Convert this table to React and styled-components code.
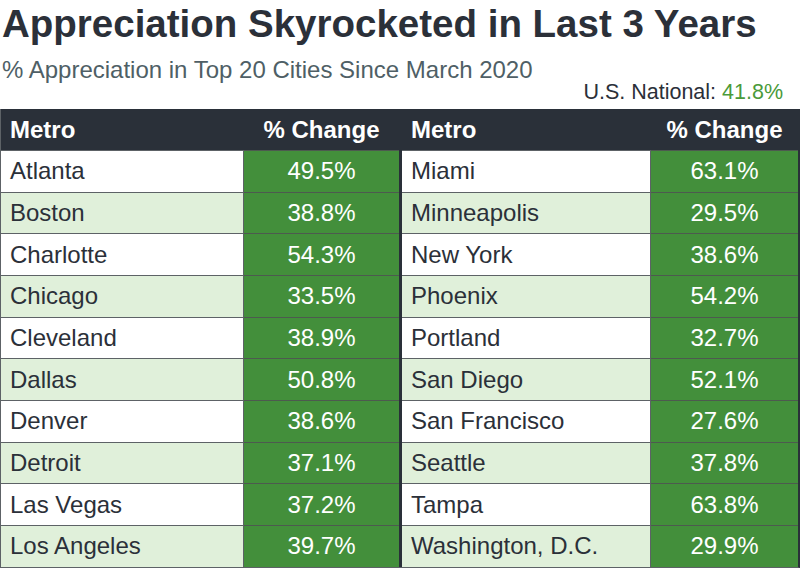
import styled, { createGlobalStyle } from 'styled-components'

const GlobalStyle = createGlobalStyle`
  body {
    margin: 0;
    background: #ffffff;
    font-family: "Liberation Sans", Arial, sans-serif;
  }
`

const left = [
  ['Atlanta', '49.5%'],
  ['Boston', '38.8%'],
  ['Charlotte', '54.3%'],
  ['Chicago', '33.5%'],
  ['Cleveland', '38.9%'],
  ['Dallas', '50.8%'],
  ['Denver', '38.6%'],
  ['Detroit', '37.1%'],
  ['Las Vegas', '37.2%'],
  ['Los Angeles', '39.7%'],
]

const right = [
  ['Miami', '63.1%'],
  ['Minneapolis', '29.5%'],
  ['New York', '38.6%'],
  ['Phoenix', '54.2%'],
  ['Portland', '32.7%'],
  ['San Diego', '52.1%'],
  ['San Francisco', '27.6%'],
  ['Seattle', '37.8%'],
  ['Tampa', '63.8%'],
  ['Washington, D.C.', '29.9%'],
]

const Page = styled.div`
  width: 802px;
  height: 570px;
  overflow: hidden;
  color: #2b3039;
`

const Title = styled.h1`
  margin: 0;
  padding: 2px 0 0 2px;
  font-size: 38.5px;
  line-height: 44px;
  font-weight: 700;
  color: #2b3039;
`

const Subtitle = styled.div`
  margin-top: 10px;
  padding-left: 2px;
  font-size: 24px;
  line-height: 28px;
  color: #4f5f66;
`

const National = styled.div`
  margin-top: -3px;
  text-align: right;
  padding-right: 19px;
  font-size: 21.5px;
  line-height: 22px;
  color: #2b3039;

  span { color: #4a9a3a; }
`

const Tables = styled.div`
  display: flex;
  width: 800px;
  margin-top: 6px;
  background: #2a3039;
  border-right: 2px solid #2a3039;
  border-bottom: 1px solid #5d6266;
  box-sizing: border-box;
`

const Table = styled.div`
  display: grid;
  grid-template-columns: ${p => p.$cols};
  grid-template-rows: 41px repeat(10, 41.67px);
  border-left: ${p => (p.$gap ? 'none' : '1px solid #5d6266')};
  margin-left: ${p => (p.$gap ? '3px' : '0')};
`

const Head = styled.div`
  display: flex;
  align-items: center;
  justify-content: ${p => (p.$center ? 'center' : 'flex-start')};
  padding-left: ${p => (p.$center ? '0' : '9px')};
  background: #2a3039;
  color: #ffffff;
  font-size: 24px;
  font-weight: 700;
`

const Cell = styled.div`
  display: flex;
  align-items: center;
  padding-left: 9px;
  font-size: 24px;
  background: ${p => (p.$alt ? '#e0f0da' : '#ffffff')};
  color: #2b3039;
  border-top: 1px solid #5d6266;
  border-right: 1px solid #5d6266;
`

const Value = styled.div`
  display: flex;
  align-items: center;
  justify-content: center;
  font-size: 24px;
  background: #438f3b;
  color: #ffffff;
  border-top: 1px solid #4d5a4f;
`

function MetroTable({ rows, cols, gap }) {
  return (
    <Table $cols={cols} $gap={gap}>
      <Head>Metro</Head>
      <Head $center>% Change</Head>
      {rows.map(([city, pct], i) => [
        <Cell key={city} $alt={i % 2 === 1}>{city}</Cell>,
        <Value key={city + '-v'}>{pct}</Value>,
      ])}
    </Table>
  )
}

export default function App() {
  return (
    <Page>
      <GlobalStyle />
      <Title>Appreciation Skyrocketed in Last 3 Years</Title>
      <Subtitle>% Appreciation in Top 20 Cities Since March 2020</Subtitle>
      <National>U.S. National: <span>41.8%</span></National>
      <Tables>
        <MetroTable rows={left} cols="243px 155px" />
        <MetroTable rows={right} cols="249px 147px" gap />
      </Tables>
    </Page>
  )
}
